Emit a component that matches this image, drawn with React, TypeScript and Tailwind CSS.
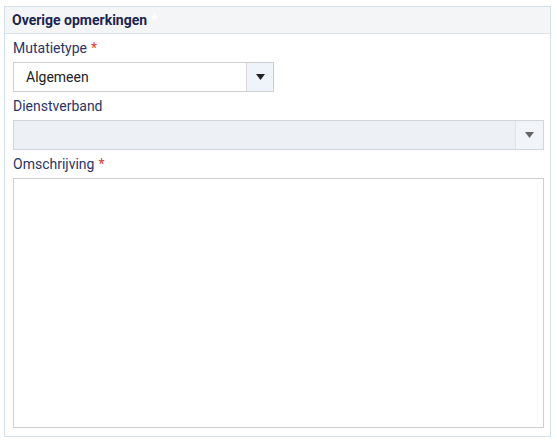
import React from "react"

const Caret = ({ className }: { className: string }) => (
    <svg width="9" height="6" viewBox="0 0 9 6" className={className}>
        <path d="M0 0h9L4.5 6z" fill="currentColor" />
    </svg>
)

const Label = ({ text, required }: { text: string; required?: boolean }) => (
    <div className="h-[28px] flex items-center text-[14px] text-[#2a3563]">
        {text}
        {required && <span className="ml-1 text-[#e53935]">*</span>}
    </div>
)

export default function App() {
    return (
        <div className="w-[557px] h-[448px] bg-white pt-[6px] pl-[4px] font-['Roboto',sans-serif]">
            <div className="w-[547px] h-[431px] border border-[#d3e0ec] flex flex-col">
                <div className="h-[27px] bg-[#f4f5f7] border-b border-[#dde3ea] flex items-center pl-[7px] text-[14px] font-bold text-[#1c2550]">
                    Overige opmerkingen<span className="ml-1 text-white">*</span>
                </div>
                <div className="px-[8px] flex flex-col">
                    <Label text="Mutatietype" required />
                    <div className="w-[261px] h-[30px] border border-[#cfcfcf] flex">
                        <div className="flex-1 flex items-center pl-[12px] text-[14px] text-[#222]">Algemeen</div>
                        <div className="w-[27px] bg-[#eef4fa] border-l border-[#d6d6d6] flex items-center justify-center">
                            <Caret className="text-[#222]" />
                        </div>
                    </div>
                    <Label text="Dienstverband" />
                    <div className="w-[531px] h-[30px] border border-[#cfd6dc] bg-[#edf1f5] flex">
                        <div className="flex-1" />
                        <div className="w-[28px] bg-[#f1f4f8] border-l border-[#dfe4e9] flex items-center justify-center">
                            <Caret className="text-[#666]" />
                        </div>
                    </div>
                    <Label text="Omschrijving" required />
                    <textarea className="w-[531px] h-[250px] border border-[#cfcfcf] resize-none outline-none" />
                </div>
            </div>
        </div>
    )
}
